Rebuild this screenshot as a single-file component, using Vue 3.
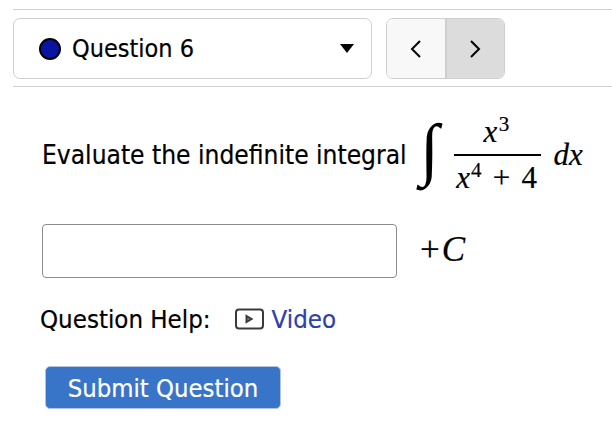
<script setup>
const title = 'Question 6'
</script>

<template>
  <div class="page">
    <div class="bar">
      <div class="select">
        <span class="dot"></span>
        <span class="title">{{ title }}</span>
        <span class="caret"></span>
      </div>
      <div class="nav">
        <button class="nav-btn">
          <svg width="14" height="20" viewBox="0 0 14 20"><path d="M11 2 3 10l8 8" fill="none" stroke="#000" stroke-width="2"/></svg>
        </button>
        <button class="nav-btn active">
          <svg width="14" height="20" viewBox="0 0 14 20"><path d="M3 2l8 8-8 8" fill="none" stroke="#000" stroke-width="2"/></svg>
        </button>
      </div>
    </div>

    <div class="question">
      <span class="qtext">Evaluate the indefinite integral</span>
      <span class="integral">∫</span>
      <span class="frac">
        <span class="num"><i>x</i><sup>3</sup></span>
        <span class="den"><i>x</i><sup>4</sup> + 4</span>
      </span>
      <span class="dx"><i>dx</i></span>
    </div>

    <div class="answer">
      <div class="input"></div>
      <span class="plus">+<i>C</i></span>
    </div>

    <div class="help">
      <span class="help-label">Question Help:</span>
      <svg class="play" width="31" height="24" viewBox="0 0 31 24">
        <rect x="2" y="2.5" width="27" height="19" rx="3" fill="none" stroke="#3a3a3a" stroke-width="2"/>
        <path d="M12.5 9v6l5-3z" fill="#888" stroke="#3a3a3a" stroke-width="2"/>
      </svg>
      <span class="video">Video</span>
    </div>

    <button class="submit">Submit Question</button>
  </div>
</template>

<style scoped>
.page {
  width: 612px;
  height: 448px;
  padding-top: 9px;
  box-sizing: border-box;
  overflow: hidden;
  background: #fff;
  color: #000;
  font-family: "DejaVu Sans Condensed", "DejaVu Sans", sans-serif;
  -webkit-text-stroke: 0.2px currentColor;
}
.bar {
  margin-left: 13px;
  padding: 8px 0 7px;
  display: flex;
  gap: 14px;
  border-top: 1px solid #cfcfcf;
  border-bottom: 1px solid #cfcfcf;
  width: 599px;
  box-sizing: border-box;
  height: 78px;
}
.select {
  width: 359px;
  height: 61px;
  box-sizing: border-box;
  border: 1px solid #cfcfcf;
  border-radius: 7px;
  display: flex;
  align-items: center;
  padding: 0 17px 0 25px;
}
.dot {
  width: 22px;
  height: 22px;
  box-sizing: border-box;
  border-radius: 50%;
  background: #0a14a0;
  border: 2.5px solid #000;
  margin-right: 11px;
}
.title {
  font-size: 25px;
  flex: 1;
}
.caret {
  width: 0;
  height: 0;
  border-left: 7px solid transparent;
  border-right: 7px solid transparent;
  border-top: 9px solid #000;
}
.nav {
  display: flex;
  width: 119px;
  height: 61px;
  box-sizing: border-box;
  border: 1px solid #cfcfcf;
  border-radius: 7px;
  overflow: hidden;
}
.nav-btn {
  flex: 1;
  border: 0;
  padding: 0;
  background: #f8f8f8;
  display: flex;
  align-items: center;
  justify-content: center;
}
.nav-btn.active {
  background: #dcdcdc;
  border-left: 2px solid #cfcfcf;
}
.question {
  display: flex;
  align-items: center;
  margin: 28px 0 0 42px;
  height: 85px;
}
.qtext {
  font-size: 26.1px;
  white-space: nowrap;
  margin-bottom: 5px;
}
.integral {
  font-family: "Liberation Serif", serif;
  font-size: 69px;
  line-height: 85px;
  width: 28px;
  margin: 0 10px 17px 9px;
  display: flex;
  justify-content: center;
  -webkit-text-stroke: 0;
}
.frac {
  display: flex;
  flex-direction: column;
  align-items: center;
  width: 87px;
  margin-bottom: 5px;
  font-family: "Liberation Serif", serif;
  font-size: 31px;
  line-height: 40px;
}
.num {
  width: 100%;
  text-align: center;
  padding-bottom: 2px;
  letter-spacing: 1.5px;
  border-bottom: 2px solid #000;
}
.den {
  white-space: nowrap;
  padding-top: 2px;
  letter-spacing: 1px;
  word-spacing: 1.5px;
}
sup {
  font-size: 21px;
  line-height: 0;
}
.dx {
  font-family: "Liberation Serif", serif;
  font-size: 31px;
  margin: 0 0 5px 13px;
}
.answer {
  display: flex;
  align-items: center;
  margin: 24px 0 0 42px;
}
.input {
  width: 355px;
  height: 54px;
  box-sizing: border-box;
  border: 1px solid #8c8c8c;
  border-radius: 4px;
}
.plus {
  margin-left: 23px;
  margin-bottom: 2px;
  font-family: "Liberation Serif", serif;
  font-size: 35px;
  letter-spacing: 2px;
}
.help {
  display: flex;
  align-items: center;
  margin: 26px 0 0 40px;
  font-size: 25.6px;
}
.play {
  margin-left: 23px;
  margin-right: 7px;
}
.video {
  color: #3040a8;
}
.submit {
  display: block;
  margin: 32px 0 0 45px;
  width: 236px;
  height: 43px;
  padding: 0;
  border: 1px solid #b4c4dc;
  border-radius: 5px;
  background: #3874c8;
  color: #fff;
  font-family: "DejaVu Sans Condensed", "DejaVu Sans", sans-serif;
  font-size: 25.4px;
}
</style>
